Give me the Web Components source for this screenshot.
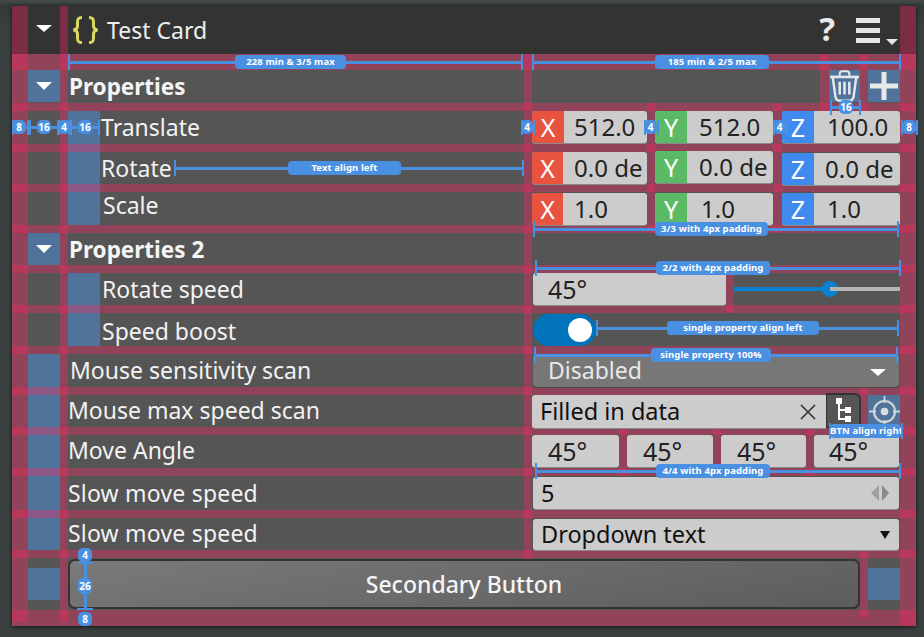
<!DOCTYPE html>
<html><head><meta charset="utf-8"><title>Test Card</title>
<style>
html,body{margin:0;height:100%}
body{background:linear-gradient(#454a4a,#343838 6px,#3a3f3f 30px);font-family:"Noto Sans","Open Sans",sans-serif;color:#fff;overflow:hidden;padding:6px 8px 11px 12px;box-sizing:border-box;height:637px}
</style></head><body>
<spec-card>
  <card-header style="grid-area:1/1/2/9"></card-header>

  <blue-block style="grid-area:3/2/4/3;height:32px"><tri-caret></tri-caret></blue-block>
  <blue-block style="grid-area:5/4/11/5;height:114px"></blue-block>
  <blue-block style="grid-area:11/2/12/3;height:32px"><tri-caret></tri-caret></blue-block>
  <blue-block style="grid-area:13/4/17/5;height:73px"></blue-block>
  <blue-block style="grid-area:17/2/26/3"></blue-block>
  <blue-block style="grid-area:27/2/28/3;margin-top:10px;height:32px"></blue-block>
  <blue-block style="grid-area:27/7/28/8;margin:10px 0 0 336px;height:32px"></blue-block>
  <blue-block style="grid-area:3/7/4/8;margin-left:297px;width:31px;height:32px"><icon-trash></icon-trash></blue-block>
  <blue-block style="grid-area:3/7/4/8;margin-left:336px;height:32px"><icon-plus></icon-plus></blue-block>
  <blue-block style="grid-area:19/7/20/8;margin-left:336px;height:32px"><icon-target></icon-target></blue-block>

  <guide-band style="grid-row:2"></guide-band><guide-band style="grid-row:4"></guide-band>
  <guide-band style="grid-row:6"></guide-band><guide-band style="grid-row:8"></guide-band>
  <guide-band style="grid-row:10"></guide-band><guide-band style="grid-row:12"></guide-band>
  <guide-band style="grid-row:14"></guide-band><guide-band style="grid-row:16"></guide-band>
  <guide-band style="grid-row:18"></guide-band><guide-band style="grid-row:20"></guide-band>
  <guide-band style="grid-row:22"></guide-band><guide-band style="grid-row:24"></guide-band>
  <guide-band style="grid-row:26"></guide-band><guide-band style="grid-row:28"></guide-band>

  <guide-strip style="grid-area:1/1/29/2;margin-bottom:4px"></guide-strip>
  <guide-strip style="grid-area:1/3/29/4;margin-bottom:4px"></guide-strip>
  <guide-strip style="grid-area:2/6/27/7;margin-bottom:-2px"></guide-strip>
  <guide-strip style="grid-area:1/8/29/9"></guide-strip>
  <guide-strip style="grid-area:2/7/5/8;margin-left:288px;width:9px"></guide-strip>
  <guide-strip style="grid-area:2/7/5/8;margin-left:328px"></guide-strip>
  <guide-strip style="grid-area:4/7/11/8;margin-left:115px"></guide-strip>
  <guide-strip style="grid-area:4/7/11/8;margin-left:241px;width:9px"></guide-strip>
  <guide-strip style="grid-area:13/7/15/8;margin-left:194px"></guide-strip>
  <guide-strip style="grid-area:18/7/20/8;margin-left:328px"></guide-strip>
  <guide-strip style="grid-area:20/7/23/8;margin-left:87px"></guide-strip>
  <guide-strip style="grid-area:20/7/23/8;margin-left:181px"></guide-strip>
  <guide-strip style="grid-area:20/7/23/8;margin-left:274px"></guide-strip>
  <guide-strip style="grid-area:26/7/29/8;margin:0 0 8px 328px"></guide-strip>

  <prop-label heading style="grid-area:3/4/4/6">Properties</prop-label>
  <prop-label style="grid-area:5/5/6/6;--nudge:1px">Translate</prop-label>
  <prop-label style="grid-area:7/5/8/6;--nudge:1px">Rotate</prop-label>
  <prop-label style="grid-area:9/5/10/6;--nudge:3px;--lift:6px">Scale</prop-label>
  <prop-label heading style="grid-area:11/4/12/6">Properties 2</prop-label>
  <prop-label style="grid-area:13/5/14/6;--nudge:2px">Rotate speed</prop-label>
  <prop-label style="grid-area:15/5/16/6;--nudge:2px;padding-top:3px">Speed boost</prop-label>
  <prop-label style="grid-area:17/4/18/6;--nudge:2px">Mouse sensitivity scan</prop-label>
  <prop-label style="grid-area:19/4/20/6;--lift:2px">Mouse max speed scan</prop-label>
  <prop-label style="grid-area:21/4/22/6;--lift:2px">Move Angle</prop-label>
  <prop-label style="grid-area:23/4/24/6;letter-spacing:.2px">Slow move speed</prop-label>
  <prop-label style="grid-area:25/4/26/6;letter-spacing:.2px;--lift:2px">Slow move speed</prop-label>

  <field-row style="grid-area:5/7/6/8">
    <vec-field axis="X" style="width:115px;--pad:10px">512.0</vec-field>
    <vec-field axis="Y" style="width:118px;--pad:12px">512.0</vec-field>
    <vec-field axis="Z" style="width:118px;margin-left:1px;--pad:13px">100.0</vec-field>
  </field-row>
  <field-row style="grid-area:7/7/8/8">
    <vec-field axis="X" style="width:115px;--tab:31px;--pad:11px">0.0 de</vec-field>
    <vec-field axis="Y" style="width:118px;margin-top:-1px;--pad:12px">0.0 de</vec-field>
    <vec-field axis="Z" style="width:118px;margin:1px 0 0 1px;--pad:11px">0.0 de</vec-field>
  </field-row>
  <field-row style="grid-area:9/7/10/8;margin-top:1px">
    <vec-field axis="X" style="width:115px;--tab:31px;--pad:11px">1.0</vec-field>
    <vec-field axis="Y" style="width:118px;--pad:14px">1.0</vec-field>
    <vec-field axis="Z" style="width:118px;margin-left:1px;--pad:13px">1.0</vec-field>
  </field-row>

  <field-row style="grid-area:13/7/14/8">
    <text-field style="width:193px;margin-left:1px;--pad:15px">45°</text-field>
    <range-slider></range-slider>
  </field-row>
  <toggle-switch style="grid-area:15/7/16/8;margin:1px 0 0 1px"></toggle-switch>
  <drop-select style="grid-area:17/7/18/8;margin:2px 1px 0 1px"></drop-select>
  <field-row style="grid-area:19/7/20/8;gap:0">
    <clear-field style="width:294px">Filled in data</clear-field>
    <tree-button></tree-button>
  </field-row>
  <field-row style="grid-area:21/7/22/8">
    <text-field style="width:87px;--pad:16px">45°</text-field>
    <text-field style="width:86px;--pad:16px">45°</text-field>
    <text-field style="width:85px;--pad:16px">45°</text-field>
    <text-field style="width:85px;--pad:15px">45°</text-field>
  </field-row>
  <number-field style="grid-area:23/7/24/8;margin:1px 1px 0 1px">5</number-field>
  <small-select style="grid-area:25/7/26/8;margin:1px 1px 0 1px">Dropdown text</small-select>
  <secondary-button style="grid-area:27/4/28/8;margin:1px 40px 1px 0">Secondary Button</secondary-button>

  <guide-measure x="68" y="62" w="455" px="235" pw="111" label="228 min &amp; 3/5 max"></guide-measure>
  <guide-measure x="532" y="62" w="369" px="655" pw="114" label="185 min &amp; 2/5 max"></guide-measure>
  <guide-measure x="12" y="127" w="17" px="12" pw="14" small label="8"></guide-measure>
  <guide-measure x="29" y="127" w="30" px="37" pw="14" small label="16"></guide-measure>
  <guide-measure x="58" y="127" w="12" px="58" pw="12" small label="4"></guide-measure>
  <guide-measure x="69" y="127" w="31" px="78" pw="14" small label="16"></guide-measure>
  <guide-measure x="521" y="127" w="12" px="521" pw="12" small label="4"></guide-measure>
  <guide-measure x="644" y="127" w="13" px="644" pw="13" small label="4"></guide-measure>
  <guide-measure x="773" y="127" w="13" px="773" pw="13" small label="4"></guide-measure>
  <guide-measure x="901" y="127" w="16" px="902" pw="14" small label="8"></guide-measure>
  <guide-measure x="174" y="168" w="350" px="288" pw="113" label="Text align left"></guide-measure>
  <guide-measure x="830" y="107" w="31" px="839" pw="14" small label="16"></guide-measure>
  <guide-measure x="533" y="229" w="366" px="655" pw="113" label="3/3 with 4px padding"></guide-measure>
  <guide-measure x="535" y="268" w="366" px="656" pw="114" label="2/2 with 4px padding"></guide-measure>
  <guide-measure x="596" y="328" w="303" px="667" pw="152" label="single property align left"></guide-measure>
  <guide-measure x="534" y="355" w="364" px="651" pw="120" label="single property 100%"></guide-measure>
  <guide-measure x="829" y="431" w="73" px="830" pw="71" label="BTN align right"></guide-measure>
  <guide-measure x="535" y="471" w="366" px="656" pw="114" label="4/4 with 4px padding"></guide-measure>
  <guide-vmeasure></guide-vmeasure>
</spec-card>

<script>
const PINK='rgba(255,37,99,.355)';
function el(name,css,html,extra){
  const T=document.createElement('template');
  T.innerHTML='<style>'+css+'</style>'+html;
  customElements.define(name,class extends HTMLElement{
    constructor(){super();this.attachShadow({mode:'open'}).appendChild(T.content.cloneNode(true));}
    connectedCallback(){if(extra)extra(this,this.shadowRoot);}
  });
}
el('spec-card',`:host{display:block;position:relative;width:904px;height:620px;background:#555;box-shadow:0 1px 4px rgba(0,0,0,.7)}
.g{display:grid;width:100%;height:100%;
grid-template-columns:16px 32px 8px 32px 424px 8px 368px 16px;
grid-template-rows:48px 16px 33px 8px 33px 8px 32px 8px 33px 8px 32px 8px 32px 8px 33px 8px 33px 8px 32px 8px 33px 8px 34px 8px 32px 8px 52px 16px}`,`<div class="g"><slot></slot></div>`);
el('guide-band',`:host{display:block;grid-column:1/-1;background:${PINK}}`,``);
el('guide-strip',`:host{display:block;background:${PINK}}`,``,h=>{if(h.style.marginLeft){h.style.justifySelf='start';if(!h.style.width)h.style.width='8px'}});
el('blue-block',`:host{display:flex;align-items:center;justify-content:center;background:#4f739b;min-width:0}`,`<slot></slot>`);
el('tri-caret',`:host{display:block;width:0;height:0;border-left:8px solid transparent;border-right:8px solid transparent;border-top:8px solid #fff}`,``);
el('card-header',`:host{display:flex;align-items:center;background:#333;height:48px}
.c{margin-left:24px;width:0;height:0;border-left:8px solid transparent;border-right:8px solid transparent;border-top:7px solid #fff;margin-top:-3px}
svg{display:block}
.b{margin-left:19px}
.t{margin-left:7px;font-size:23px;color:#eee}
.s{flex:1}
.q{font-size:33px;font-weight:700;color:#e8e8e8;margin-right:20px;margin-top:-4px;line-height:1}
.m{margin-right:18px;margin-top:4px}`,
`<div class="c"></div>
<svg class="b" width="29" height="30" viewBox="0 0 29 30"><path d="M11 2.500C7.500 2.500 6.500 3.500 6.500 7V11C6.500 13.500 5.500 14.500 2.500 15C5.500 15.500 6.500 16.500 6.500 19V23C6.500 26.500 7.500 27.500 11 27.500M18 2.500C21.500 2.500 22.500 3.500 22.500 7V11C22.500 13.500 23.500 14.500 26.500 15C23.500 15.500 22.500 16.500 22.500 19V23C22.500 26.500 21.500 27.500 18 27.500" fill="none" stroke="#d8d85e" stroke-width="3"/></svg>
<span class="t">Test Card</span><span class="s"></span><span class="q">?</span>
<svg class="m" width="43" height="28" viewBox="0 0 43 28"><path d="M1 0h24v5H1zM1 10h24v5H1zM1 20h24v5H1z" fill="#e6e6e6"/><path d="M31 21h12l-6 6z" fill="#e6e6e6"/></svg>`);
el('prop-label',`:host{display:flex;align-items:center;box-sizing:border-box;font-size:23px;color:#f2f2f2;white-space:nowrap;line-height:1;padding-left:var(--nudge,0);padding-bottom:var(--lift,0)}
:host([heading]){font-weight:700;font-size:22.5px;padding-left:1px;padding-top:2px;color:#f5f5f5}`,`<slot></slot>`);
el('field-row',`:host{display:flex;gap:8px;align-items:flex-start;min-width:0}`,`<slot></slot>`);
el('vec-field',`:host{display:flex;height:32px;border-radius:3px;overflow:hidden;background:#ccc;color:#222;box-sizing:border-box;box-shadow:0 1px 0 #8a8a8a;font-size:24px;line-height:32px}
.a{flex:0 0 var(--tab,32px);text-align:center;color:#fff;font-size:25px}
.v{padding-left:var(--pad,11px);white-space:nowrap;overflow:hidden}`,`<span class="a"></span><span class="v"><slot></slot></span>`,
(h,r)=>{const a=r.querySelector('.a');const k=h.getAttribute('axis');a.textContent=k;a.style.background={X:'#e7533f',Y:'#5aba65',Z:'#3e8aee'}[k];});
el('text-field',`:host{display:block;height:32px;background:#ccc;color:#222;border-radius:3px;box-shadow:0 1px 0 #8a8a8a;font-size:25px;line-height:32px;padding-left:var(--pad,15px);box-sizing:border-box}`,`<slot></slot>`);
el('range-slider',`:host{display:flex;align-items:center;flex:1;height:32px}
.f{width:96px;height:4px;background:#0a80d0}
.k{width:16px;height:16px;border-radius:50%;background:#0a80d0;margin-left:-8px;flex:none}
.r{flex:1;height:4px;background:#b4b4b4;margin-left:-8px}`,`<div class="f"></div><div class="k"></div><div class="r"></div>`);
el('toggle-switch',`:host{display:flex;align-items:center;justify-content:flex-end;width:63px;height:32px;background:#0073bb;border-radius:16px;box-sizing:border-box;padding-right:4px;justify-self:start}
i{display:block;width:24px;height:24px;border-radius:50%;background:#fff}`,`<i></i>`);
el('drop-select',`:host{display:flex;align-items:center;justify-content:space-between;background:#777;border-radius:0 0 4px 4px;color:#e8e8e8;font-size:23px;line-height:1;padding:0 13px 0 15px;height:31px;box-shadow:0 1px 0 #4a4a4a}
span{margin-top:-2px}
i{display:block;width:0;height:0;border-left:8px solid transparent;border-right:8px solid transparent;border-top:7px solid #fff;margin-top:2px}`,`<span>Disabled</span><i></i>`);
el('clear-field',`:host{display:flex;align-items:center;justify-content:space-between;background:#ccc;color:#111;height:33px;border-radius:3px 0 0 3px;font-size:23.5px;padding:0 10px 0 8px;box-sizing:border-box;box-shadow:0 1px 0 #8a8a8a}
svg{display:block}`,`<span style="margin-top:-2px"><slot></slot></span><svg width="16" height="16" viewBox="0 0 16 16"><path d="M1 1L15 15M15 1L1 15" stroke="#333" stroke-width="1.6"/></svg>`);
el('tree-button',`:host{display:flex;align-items:center;justify-content:center;width:35px;height:35px;margin-top:-2px;box-sizing:border-box;background:#555;border:2px solid #333;border-left-width:1px;border-radius:0 6px 6px 0;flex:none}
svg{display:block}`,`<svg width="17" height="25" viewBox="0 0 17 25"><path d="M1 0h6v6H1zM10 9h6v6h-6zM10 18h6v6h-6z" fill="#fff"/><path d="M4 6V21H10M4 12H10" fill="none" stroke="#fff" stroke-width="2"/></svg>`);
el('number-field',`:host{display:flex;align-items:center;justify-content:space-between;background:#ccc;color:#111;height:32px;border-radius:3px;font-size:23.5px;padding:0 10px 0 8px;box-sizing:border-box;box-shadow:0 1px 0 #8a8a8a}
svg{display:block}`,`<slot></slot><svg width="18" height="16" viewBox="0 0 18 16"><path d="M8 0V16L0 8z" fill="#a0a0a0"/><path d="M11 0V16L18 8z" fill="#8a8a8a"/></svg>`);
el('small-select',`:host{display:flex;align-items:center;justify-content:space-between;background:#ccc;color:#111;height:31px;border-radius:3px;font-size:23.5px;padding:0 9px 0 8px;box-sizing:border-box;box-shadow:0 1px 0 #8a8a8a}
i{display:block;width:0;height:0;border-left:5px solid transparent;border-right:5px solid transparent;border-top:8px solid #111}`,`<span style="margin-top:-1px"><slot></slot></span><i></i>`);
el('secondary-button',`:host{display:flex;align-items:center;justify-content:center;box-sizing:border-box;background:linear-gradient(170deg,#7a7a7a,#5c5c5c);border:2px solid #333;border-radius:7px;color:#f5f5f5;font-size:23px;font-weight:500}`,`<slot></slot>`);
el('icon-trash',`:host{display:block;line-height:0}svg{display:block}`,`<svg width="31" height="32" viewBox="0 0 29 30"><path d="M1 6.500H28" stroke="#e4e8ec" stroke-width="2.500" fill="none"/><path d="M10 5.500V3.500C10 2 11 1.200 12.500 1.200H16.500C18 1.200 19 2 19 3.500V5.500" stroke="#e4e8ec" stroke-width="2" fill="none"/><path d="M3.500 7L6 25C6.400 27.600 7.800 28.800 10 28.800H19C21.200 28.800 22.600 27.600 23 25L25.500 7" stroke="#e4e8ec" stroke-width="2.300" fill="none"/><path d="M10 11V23M14.500 11V23M19 11V23" stroke="#e4e8ec" stroke-width="2.400"/></svg>`);
el('icon-plus',`:host{display:block;line-height:0}svg{display:block}`,`<svg width="28" height="28" viewBox="0 0 28 28"><path d="M11.500 0h5v11.500H28v5H16.500V28h-5V16.500H0v-5h11.500z" fill="#e8e8e8"/></svg>`);
el('icon-target',`:host{display:block;line-height:0}svg{display:block}`,`<svg width="31" height="31" viewBox="0 0 31 31"><circle cx="15.500" cy="15.500" r="10.500" fill="none" stroke="#cfd3d8" stroke-width="2.200"/><circle cx="15.500" cy="15.500" r="3.800" fill="#d8dce0"/><path d="M15.500 0V7M15.500 24V31M0 15.500H7M24 15.500H31" stroke="#cfd3d8" stroke-width="1.800"/></svg>`);
el('guide-measure',`:host{display:block;position:absolute;height:16px}
.w{display:flex;align-items:center;height:16px;width:100%}
.t{flex:none;width:2px;height:16px;background:#4a90e2}
.l{height:3px;background:#4a90e2}
.l.g{flex:1}
.p{flex:none;height:14px;background:#4a90e2;border-radius:4px;color:#fff;font:700 9.5px/14px "Noto Sans","Open Sans",sans-serif;letter-spacing:.1px;text-align:center;white-space:nowrap}
:host([small]) .t{height:15px}:host([small]) .p{font-size:10px;letter-spacing:0;border-radius:5px}`,
`<div class="w"><div class="t"></div><div class="l a"></div><div class="p"></div><div class="l g"></div><div class="t"></div></div>`,
(h,r)=>{const x=+h.getAttribute('x'),y=+h.getAttribute('y'),w=+h.getAttribute('w'),px=+h.getAttribute('px'),pw=+h.getAttribute('pw');
h.style.left=(x-12)+'px';h.style.top=(y-6-8)+'px';h.style.width=w+'px';
const p=r.querySelector('.p');p.textContent=h.getAttribute('label');p.style.width=pw+'px';
const a=r.querySelector('.a');a.style.width=Math.max(0,px-x-2)+'px';
if(px-x<2){p.style.marginLeft=(px-x-2)+'px'}
});
el('guide-vmeasure',`:host{display:flex;flex-direction:column;align-items:center;position:absolute;left:65px;top:542px;width:16px;height:78px}
.p{background:#4a90e2;color:#fff;font:700 10px/14px "Noto Sans","Open Sans",sans-serif;border-radius:5px;width:14px;text-align:center;flex:none}
.l{width:3px;background:#4a90e2;flex:1}
.t{height:2px;width:16px;background:#4a90e2;flex:none}`,
`<div class="p">4</div><div class="t"></div><div class="l"></div><div class="p" style="height:16px;line-height:16px">26</div><div class="l"></div><div class="t"></div><div class="p" style="margin-top:2px">8</div>`);
</script>
</body></html>
